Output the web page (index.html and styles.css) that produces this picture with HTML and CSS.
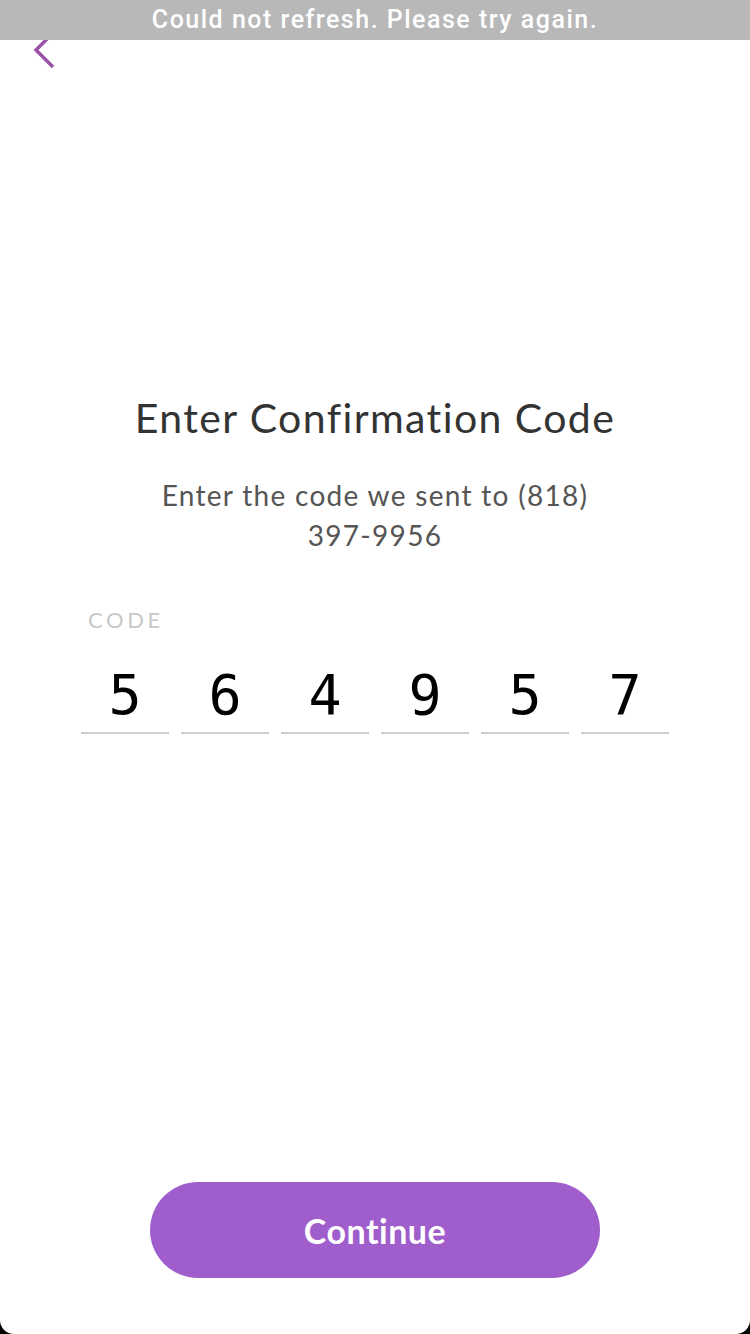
FILE: index.html
```html
<!DOCTYPE html>
<html>
<head>
<meta charset="utf-8">
<link rel="stylesheet" href="styles.css">
</head>
<body>
<div class="screen">
  <div class="banner">Could not refresh. Please try again.</div>
  <div class="nav">
    <svg class="back" width="30" height="44" viewBox="0 0 30 44"><path d="M21 5 L4 22 L21 39" fill="none" stroke="#9b50aa" stroke-width="3.5" stroke-linecap="butt" stroke-linejoin="miter"/></svg>
  </div>
  <div class="content">
    <h1 class="title">Enter Confirmation Code</h1>
    <p class="subtitle">Enter the code we sent to (818) 397-9956</p>
    <div class="code">
      <div class="code-label">CODE</div>
      <div class="digits">
        <div class="digit">5</div>
        <div class="digit">6</div>
        <div class="digit">4</div>
        <div class="digit">9</div>
        <div class="digit">5</div>
        <div class="digit">7</div>
      </div>
    </div>
  </div>
  <button class="continue">Continue</button>
</div>
</body>
</html>
```
FILE: styles.css
```css
html, body {
  margin: 0;
  padding: 0;
  background: #000;
}
.screen {
  width: 750px;
  height: 1334px;
  background: #fff;
  border-radius: 0 0 14px 14px;
  display: flex;
  flex-direction: column;
  position: relative;
  overflow: hidden;
  font-family: "Lato", "Noto Sans", sans-serif;
}
.banner {
  position: relative;
  z-index: 2;
  height: 40px;
  background: #b8b8b8;
  color: #fff;
  font-family: "Roboto", "Inter", sans-serif;
  font-weight: 500;
  font-size: 25px;
  line-height: 40px;
  text-align: center;
  letter-spacing: 1.5px;
}
.nav {
  height: 0;
  padding-left: 32px;
}
.back {
  display: block;
  margin-top: -12px;
}
.content {
  padding-top: 354px;
  display: flex;
  flex-direction: column;
  align-items: center;
}
.title {
  margin: 0;
  font-weight: 400;
  font-size: 41px;
  line-height: 48px;
  letter-spacing: 1.4px;
  color: #333;
  text-align: center;
}
.subtitle {
  margin: 33px 0 0;
  width: 460px;
  font-size: 28px;
  line-height: 40px;
  letter-spacing: 1.3px;
  color: #555;
  text-align: center;
}
.code {
  margin-top: 51px;
  width: 588px;
}
.code-label {
  padding-left: 7px;
  font-size: 22px;
  letter-spacing: 3.6px;
  color: #c8c8c8;
  line-height: 28px;
}
.digits {
  margin-top: 25px;
  display: grid;
  grid-template-columns: repeat(6, 1fr);
  gap: 12px;
}
.digit {
  height: 73px;
  border-bottom: 2px solid #cfcfcf;
  font-family: "DejaVu Sans Mono", monospace;
  font-size: 55px;
  line-height: 72px;
  color: #000;
  text-align: center;
}
.continue {
  margin: auto auto 56px;
  width: 450px;
  height: 96px;
  border: none;
  border-radius: 48px;
  background: #a05ecd;
  color: #fff;
  font-family: "Lato", "Noto Sans", sans-serif;
  font-weight: 700;
  font-size: 34px;
  letter-spacing: 0.5px;
  padding: 0;
}
```
